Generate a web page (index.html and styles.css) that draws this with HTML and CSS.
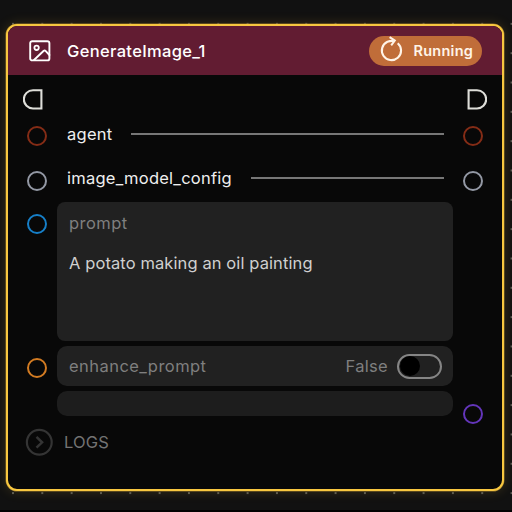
FILE: index.html
```html
<!DOCTYPE html>
<html lang="en">
<head>
<meta charset="utf-8">
<title>GenerateImage_1</title>
<link rel="stylesheet" href="styles.css">
</head>
<body>
<main class="canvas">
  <article class="node">
    <header class="head">
      <svg class="pic" width="22" height="22" viewBox="0 0 22 22" fill="none" stroke="currentColor" stroke-width="1.9" stroke-linejoin="round" stroke-linecap="round"><rect x="1.2" y="1.2" width="19.2" height="19.2" rx="2"/><circle cx="7.6" cy="7.8" r="2.2" stroke-width="1.8"/><path d="M5 20 14.5 11q1.2-.9 2.3.2l3.6 3.8"/></svg>
      <h1 class="title">GenerateImage_1</h1>
      <div class="status">
        <svg width="24" height="26" viewBox="0 0 24 26" fill="none" stroke="currentColor" stroke-width="2.1"><path d="M18.7 7.2A9.6 9.6 0 1 1 8.4 5.8q2.8-1.1 6.2-.9"/><path d="m10.6 1.2 5.2 3.4-3.6 4.8" stroke-width="2"/></svg>
        <span class="running">Running</span>
      </div>
    </header>
    <section class="body">
      <div class="row exec">
        <svg class="gate" width="20" height="21" viewBox="0 0 20 21" fill="none" stroke="currentColor" stroke-width="2.1"><path d="M18.4 1.2H10a9.1 9.1 0 0 0 0 18.3h8.4z"/></svg>
        <svg class="gate out" width="20" height="21" viewBox="0 0 20 21" fill="none" stroke="currentColor" stroke-width="2.1"><path d="M1.6 1.2H10a9.1 9.1 0 0 1 0 18.3H1.6z"/></svg>
      </div>
      <div class="row param">
        <i class="port red"></i><span class="name">agent</span><span class="wire"></span><i class="port red"></i>
      </div>
      <div class="row param">
        <i class="port gray"></i><span class="name">image_model_config</span><span class="wire"></span><i class="port gray"></i>
      </div>
      <div class="row prompt">
        <i class="port blue"></i>
        <div class="box"><span class="label">prompt</span><p class="value">A potato making an oil painting</p></div>
      </div>
      <div class="row enhance">
        <i class="port orange"></i>
        <div class="box"><span class="label">enhance_prompt</span><span class="false">False</span><span class="toggle"></span></div>
      </div>
      <div class="row output">
        <div class="box"></div><i class="port purple"></i>
      </div>
      <div class="row logs">
        <svg width="28" height="28" viewBox="0 0 28 28" fill="none" stroke="#343434" stroke-width="2.2"><circle cx="14.3" cy="14.3" r="12.4"/><path d="m11.5 8.9 5.6 5.4-5.6 5.4" stroke-width="2.5"/></svg>
        <span class="logname">LOGS</span>
      </div>
    </section>
  </article>
</main>
</body>
</html>
```

FILE: styles.css
```css
* { box-sizing: border-box; }
body {
  margin: 0;
  background: #111;
  font: 16.5px/24px Inter, "Liberation Sans", sans-serif;
}
.canvas {
  width: 512px;
  height: 512px;
  overflow: hidden;
  padding: 24px 8px 0 6px;
  border-bottom: 2px solid #020202;
  background: radial-gradient(circle, #66665f 0.6px, transparent 1.2px) -1.7px 9.2px / 29.33px 29.33px #111;
}
.node {
  height: 466.5px;
  border: 2px solid #f8c740;
  border-radius: 11px;
  overflow: hidden;
  background: #080808;
  box-shadow: 0 0 0 0.5px #8d7028, 0 0 12px 1px rgba(245, 194, 58, 0.15);
}
.head {
  display: flex;
  align-items: center;
  height: 49px;
  padding: 0 20px 0 21px;
  background: #621c32;
  color: #fff;
}
.title {
  margin: 0 0 0 16px;
  font-size: 16.5px;
  font-weight: 500;
  letter-spacing: 0.34px;
}
.status {
  display: flex;
  align-items: center;
  width: 113px;
  height: 30px;
  margin-left: auto;
  padding-left: 9.5px;
  border-radius: 15px;
  background: #c06d39;
  color: #fff4e8;
}
.status svg { margin-top: -4px; }
.running {
  margin-left: 11px;
  font-size: 14.5px;
  font-weight: 600;
  letter-spacing: 0.25px;
}
.row { display: flex; }
.exec {
  height: 37px;
  padding: 14px 15px 0;
  color: #deded9;
}
.out { margin-left: auto; }
.port {
  flex: none;
  width: 20px;
  height: 20px;
  border: 2px solid;
  border-radius: 50%;
}
.red { color: #842c16; }
.gray { color: #9398a4; }
.blue { color: #167fc8; }
.orange { color: #d27b22; }
.purple { color: #6335ba; }
.param {
  align-items: center;
  height: 44px;
  padding: 0 19px;
}
.param .port { margin-top: 4px; }
.param .gray { margin-top: 5px; }
.name {
  margin-left: 20px;
  color: #efefef;
  letter-spacing: 0.25px;
}
.wire {
  flex: 1;
  height: 2px;
  margin: -1px 19px 0;
  background: #777;
}
.box {
  width: 396px;
  border-radius: 8px;
  background: #212121;
}
.prompt {
  height: 139px;
  margin-top: 2px;
  padding-left: 19px;
}
.prompt .port { margin-top: 12px; }
.prompt .box {
  margin-left: 10px;
  padding: 9px 12px;
}
.label, .false { color: #7f7f7f; }
.label { letter-spacing: 0.45px; }
.false { letter-spacing: 0.3px; }
.value {
  margin: 16px 0 0;
  color: #d0d0d0;
  letter-spacing: 0.1px;
}
.enhance {
  align-items: center;
  height: 40px;
  margin-top: 5px;
  padding-left: 19px;
}
.enhance .port { margin-top: 3px; }
.enhance .box {
  display: flex;
  align-items: center;
  height: 40px;
  margin-left: 10px;
  padding: 0 11px 0 12px;
  border-radius: 10px;
}
.false { margin-left: auto; }
.toggle {
  width: 45px;
  height: 25px;
  margin-left: 9px;
  border: 2px solid #858585;
  border-radius: 13px;
}
.toggle::before {
  content: "";
  display: block;
  width: 20px;
  height: 20px;
  margin: 0.5px 0 0 0.5px;
  border-radius: 50%;
  background: #000;
}
.output {
  height: 25px;
  margin-top: 5px;
  padding-left: 49px;
}
.output .box {
  border-radius: 10px;
  background: #1d1d1d;
}
.output .port { margin: 12.5px 0 0 10px; }
.logs {
  align-items: center;
  margin-top: 12px;
  padding-left: 17px;
  color: #737373;
}
.logname { margin-left: 11px; letter-spacing: 0.15px; }
```
